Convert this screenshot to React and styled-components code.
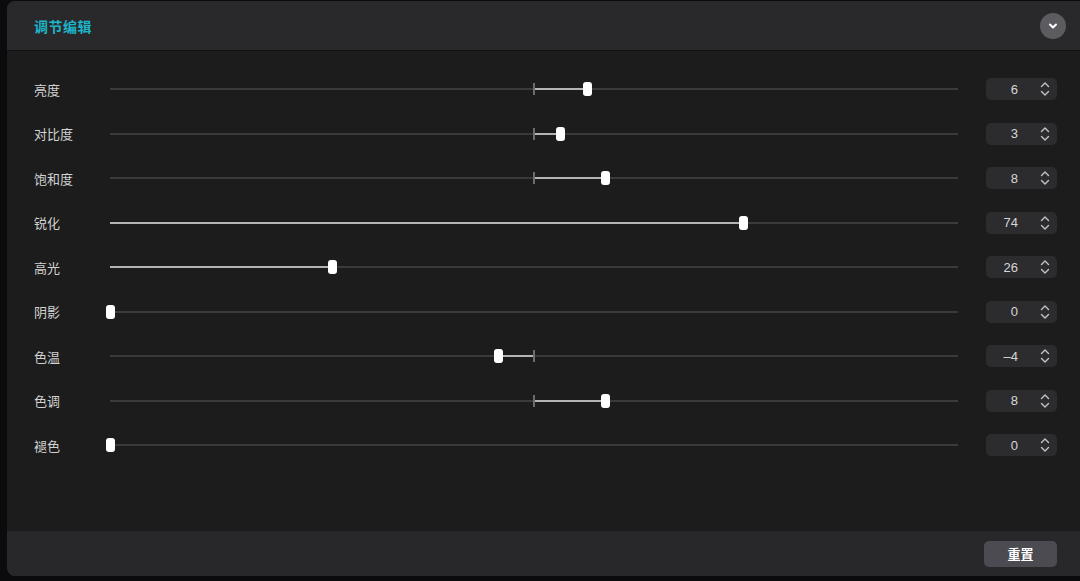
import React from 'react';
import styled, { createGlobalStyle } from 'styled-components';

const GlobalStyle = createGlobalStyle`
  html, body {
    margin: 0;
    padding: 0;
    background: #0b0b0d;
    overflow: hidden;
  }
  body {
    font-family: "Noto Sans CJK SC", "Noto Sans", sans-serif;
  }
`;

const Page = styled.div`
  width: 1080px;
  height: 581px;
  padding: 1px 0 0 7px;
  box-sizing: border-box;
`;

const Panel = styled.div`
  height: 575px;
  display: flex;
  flex-direction: column;
  border-radius: 8px 0 0 8px;
  overflow: hidden;
  background: #1c1c1c;
`;

const Header = styled.div`
  height: 49px;
  flex: none;
  display: flex;
  align-items: center;
  justify-content: space-between;
  padding: 0 14px 0 27px;
  background: #29292b;
  border-bottom: 1px solid #121214;
`;

const Title = styled.div`
  color: #1eb4c8;
  font-size: 14px;
  font-weight: 700;
  letter-spacing: 0.5px;
`;

const Collapse = styled.button`
  width: 26px;
  height: 26px;
  border-radius: 50%;
  border: none;
  padding: 0;
  background: #5b5b60;
  display: flex;
  align-items: center;
  justify-content: center;
`;

const Body = styled.div`
  flex: 1;
  padding: 16px 23px 0 27px;
`;

const Row = styled.div`
  height: 44.5px;
  display: grid;
  grid-template-columns: 48px 1fr 71px;
  column-gap: 28px;
  align-items: center;
`;

const Label = styled.div`
  color: #d2d2d2;
  font-size: 13px;
  white-space: nowrap;
`;

const Track = styled.div`
  position: relative;
  height: 2px;
  background: #3a3a3a;
`;

const Fill = styled.div`
  position: absolute;
  top: 0;
  height: 2px;
  background: #b4b4b4;
`;

const Tick = styled.div`
  position: absolute;
  left: 50%;
  top: -5px;
  width: 2px;
  height: 12px;
  margin-left: -1px;
  background: #6c6c6c;
`;

const Thumb = styled.div`
  position: absolute;
  top: -6px;
  width: 9px;
  height: 14px;
  margin-left: -4.5px;
  border-radius: 3px;
  background: #ffffff;
`;

const NumberBox = styled.div`
  height: 22px;
  border-radius: 5px;
  background: #2c2c2e;
  display: flex;
  align-items: center;
  justify-content: flex-end;
  padding-right: 7px;
  gap: 22px;
  color: #d6d6d6;
  font-family: "Liberation Sans", Arial, sans-serif;
  font-size: 13px;
`;

const Footer = styled.div`
  height: 45px;
  flex: none;
  display: flex;
  align-items: center;
  justify-content: flex-end;
  padding-right: 23px;
  background: #28282a;
`;

const ResetButton = styled.button`
  width: 73px;
  height: 26px;
  border: none;
  border-radius: 5px;
  background: #4b4b51;
  color: #ffffff;
  font-family: "Noto Sans CJK SC", sans-serif;
  font-size: 13px;
  font-weight: 700;
`;

const Stepper = () => (
  <svg width="10" height="16" viewBox="0 0 10 16" fill="none" stroke="#c4c4c4" strokeWidth="1.4" strokeLinecap="round" strokeLinejoin="round">
    <path d="M1.5 5.5 L5 2 L8.5 5.5" />
    <path d="M1.5 10.5 L5 14 L8.5 10.5" />
  </svg>
);

const sliders = [
  { label: '亮度', value: 6, centered: true },
  { label: '对比度', value: 3, centered: true },
  { label: '饱和度', value: 8, centered: true },
  { label: '锐化', value: 74 },
  { label: '高光', value: 26 },
  { label: '阴影', value: 0 },
  { label: '色温', value: -4, centered: true },
  { label: '色调', value: 8, centered: true },
  { label: '褪色', value: 0 },
];

const SliderRow = ({ label, value, centered }) => {
  const pos = centered ? 50 + value * 1.05 : value * 1.01;
  const from = centered ? Math.min(50, pos) : 0;
  const to = centered ? Math.max(50, pos) : pos;
  return (
    <Row>
      <Label>{label}</Label>
      <Track>
        <Fill style={{ left: `${from}%`, width: `${to - from}%` }} />
        {centered && <Tick />}
        <Thumb style={{ left: `${pos}%` }} />
      </Track>
      <NumberBox>
        <span>{value < 0 ? `–${Math.abs(value)}` : value}</span>
        <Stepper />
      </NumberBox>
    </Row>
  );
};

export default function App() {
  return (
    <Page>
      <GlobalStyle />
      <Panel>
        <Header>
          <Title>调节编辑</Title>
          <Collapse>
            <svg width="12" height="12" viewBox="0 0 12 12" fill="none" stroke="#ffffff" strokeWidth="2" strokeLinecap="round" strokeLinejoin="round">
              <path d="M3 4.5 L6 7.5 L9 4.5" />
            </svg>
          </Collapse>
        </Header>
        <Body>
          {sliders.map(s => (
            <SliderRow key={s.label} {...s} />
          ))}
        </Body>
        <Footer>
          <ResetButton>重置</ResetButton>
        </Footer>
      </Panel>
    </Page>
  );
}
